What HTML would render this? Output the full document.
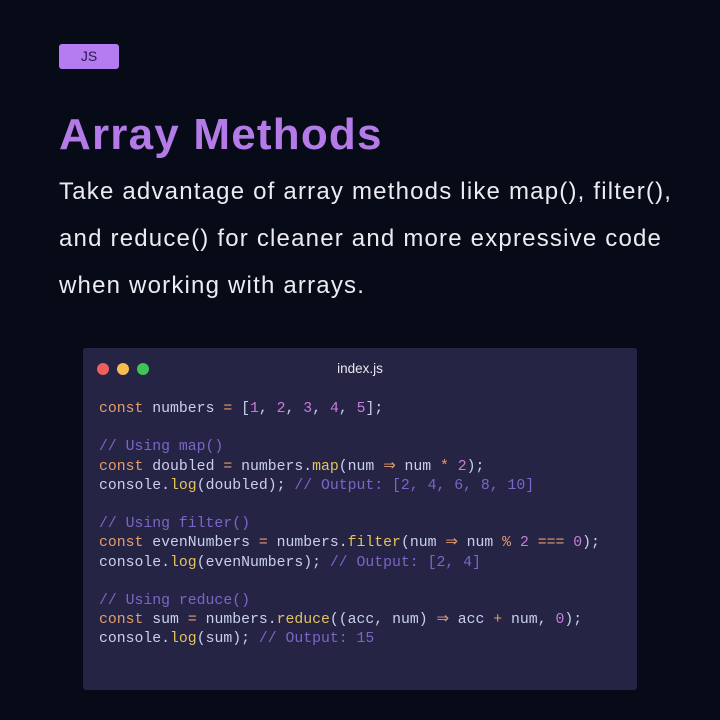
<!DOCTYPE html>
<html><head><meta charset="utf-8"><style>
body{margin:0;width:720px;height:720px;background:#070b18;overflow:hidden;position:relative;font-family:"Liberation Sans",sans-serif}
.tag{position:absolute;left:59px;top:44px;width:60px;height:25px;background:#b57bf0;border-radius:3px;color:#2a1850;font-size:14px;text-align:center;line-height:25px}
h1{position:absolute;left:59px;top:110px;margin:0;font-size:44px;font-weight:bold;color:#b47ae8;letter-spacing:1.2px}
p{position:absolute;left:59px;top:168px;margin:0;width:680px;white-space:nowrap;font-size:24px;line-height:47px;color:#ecebf2;letter-spacing:1.2px}
.card{position:absolute;left:83px;top:348px;width:554px;height:342px;background:#262445;border-radius:3px}
.dot{position:absolute;top:363px;width:12px;height:12px;border-radius:50%}
.fn{position:absolute;left:0;width:720px;top:361px;text-align:center;color:#e8e8f0;font-size:13.5px}
pre{position:absolute;left:99px;top:400px;margin:0;font-family:"Liberation Mono",monospace;font-size:14.8px;line-height:19.2px;color:#c8cff0}
.k{color:#e39d6b}.n{color:#c77ddb}.c{color:#7a66c6}.m{color:#e4c25e}.o{color:#e39d6b}
</style></head><body>
<div class="tag">JS</div>
<h1>Array Methods</h1>
<p>Take advantage of array methods like map(), filter(),<br>and reduce() for cleaner and more expressive code<br>when working with arrays.</p>
<div class="card"></div>
<div class="dot" style="left:97px;background:#ee5f5b"></div>
<div class="dot" style="left:117px;background:#f5bd4f"></div>
<div class="dot" style="left:137px;background:#3fc355"></div>
<div class="fn">index.js</div>
<pre><span class="k">const</span> numbers <span class="o">=</span> [<span class="n">1</span>, <span class="n">2</span>, <span class="n">3</span>, <span class="n">4</span>, <span class="n">5</span>];

<span class="c">// Using map()</span>
<span class="k">const</span> doubled <span class="o">=</span> numbers.<span class="m">map</span>(num <span class="o">⇒</span> num <span class="o">*</span> <span class="n">2</span>);
console.<span class="m">log</span>(doubled); <span class="c">// Output: [2, 4, 6, 8, 10]</span>

<span class="c">// Using filter()</span>
<span class="k">const</span> evenNumbers <span class="o">=</span> numbers.<span class="m">filter</span>(num <span class="o">⇒</span> num <span class="o">%</span> <span class="n">2</span> <span class="o">===</span> <span class="n">0</span>);
console.<span class="m">log</span>(evenNumbers); <span class="c">// Output: [2, 4]</span>

<span class="c">// Using reduce()</span>
<span class="k">const</span> sum <span class="o">=</span> numbers.<span class="m">reduce</span>((acc, num) <span class="o">⇒</span> acc <span class="o">+</span> num, <span class="n">0</span>);
console.<span class="m">log</span>(sum); <span class="c">// Output: 15</span></pre>
</body></html>
